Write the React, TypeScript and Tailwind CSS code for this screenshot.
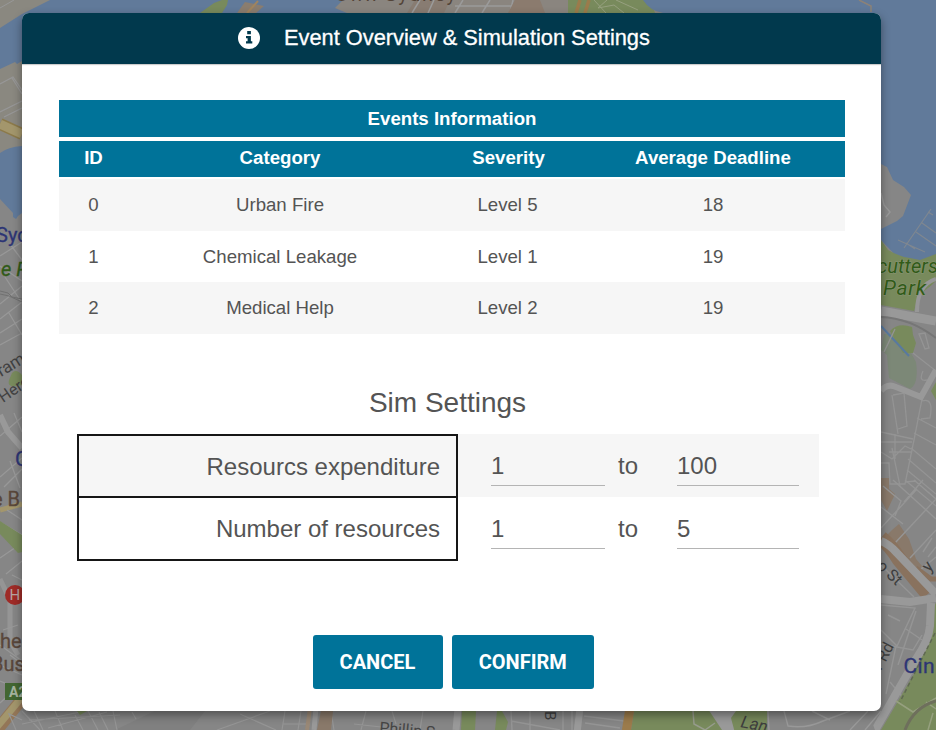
import React from "react";

const events = [
  { id: 0, category: "Urban Fire", severity: "Level 5", deadline: 18 },
  { id: 1, category: "Chemical Leakage", severity: "Level 1", deadline: 19 },
  { id: 2, category: "Medical Help", severity: "Level 2", deadline: 19 },
];

const settings = [
  { label: "Resourcs expenditure", from: "1", to: "100" },
  { label: "Number of resources", from: "1", to: "5" },
];

const columns = "grid grid-cols-[69px_304px_151px_262px]";

/* Dimmed city map behind the dialog. */
function CityMap() {
  return (
    <svg className="absolute inset-0" width="936" height="730" viewBox="0 0 936 730" fontFamily="Roboto, sans-serif">
      <rect width="936" height="730" fill="#868686" />

      {/* north-west shore */}
      <rect width="350" height="80" fill="#617a9a" />
      <path d="M0 0H50L22 14L0 28Z" fill="#8a8880" />
      <path d="M0 8L14 0" stroke="#979797" strokeWidth="1" />
      <path d="M0 69L15 62L17 64L22 61V150H0Z" fill="#8a8880" />
      <g stroke="#979797" strokeWidth="1.2" fill="none">
        <path d="M0 84L13 77L22 90M12 78L22 94M0 112L22 101M4 117L22 108" />
      </g>
      <path d="M0 124L22 134" stroke="#8c7a4a" strokeWidth="12" />
      <path d="M0 124L22 134" stroke="#a3966c" strokeWidth="9" />
      <path d="M0 153Q8 147 22 146V213L18 216L16 219L13 217V213L0 199Z" fill="#617a9a" />
      <path d="M200 13L214 3L222 0H228L227 5L222 13Z" fill="#788a5c" />
      <path d="M237 13L245 2L264 6L256 13Z" fill="#8a7d6f" />
      <path d="M258 1L247 13" stroke="#a0845e" strokeWidth="2" />
      <path d="M343 0H936V13H347L335 8Z" fill="#8a857f" />
      <path d="M415 0H450L444 13H407Z" fill="#887c72" />
      <path d="M412 13L420 0M428 13L434 0M455 13L463 0M482 13L490 0M510 13L513 0M455 6H513M530 0L543 13" stroke="#9b9b9b" strokeWidth="1.5" />
      <path d="M515 0H540L545 13H508Z" fill="#8b7b6e" />
      <path d="M568 0H650L655 13H568Z" fill="#788a5c" />
      <path d="M576 13L580 0M585 13L589 0" stroke="#9b7b4b" strokeWidth="3.5" />
      <path d="M594 0L606 13M607 0L598 8L614 5L624 13M616 0L638 10" stroke="#96a07f" strokeWidth="1" fill="none" />
      <path d="M643 0Q650 11 663 13H936V0Z" fill="#617a9a" />
      <text x="336" y="0.5" fontSize="20" fill="#534438" textLength="120">own Sydney</text>

      {/* western streets */}
      <g stroke="#989898" strokeWidth="1.3" fill="none">
        <path d="M0 256L22 242M10 244L22 260M0 266L22 281M0 304L22 286M0 319L22 302M0 333L22 319M0 345L22 333M5 277L22 303M9 313L22 335M0 436L22 417M14 413L22 432M0 477L22 458M4 487L22 469M10 461L20 488" />
      </g>
      <path d="M0 291L8 293L12 297L22 299M0 294L9 296L22 302" stroke="#717171" strokeWidth="1" fill="none" />
      <path d="M0 415L8 432L22 448" stroke="#999" strokeWidth="6" fill="none" />
      <path d="M12 373Q16 368 22 375V385L17 386Q7 388 9 380Z" fill="#788a5c" />
      <text x="-4" y="242" fontSize="20" fill="#2d3575" stroke="#2d3575" strokeWidth="0.3">Syd</text>
      <text x="1" y="276" fontSize="20" fontStyle="italic" fill="#315b18" stroke="#315b18" strokeWidth="0.3">e Park</text>
      <text fontSize="17" fill="#414141" transform="translate(1 377) rotate(-31)">ram</text>
      <text fontSize="16" fill="#414141" transform="translate(3 403) rotate(-34)">Here</text>
      <text x="15" y="466" fontSize="21" fill="#2d3575" stroke="#2d3575" strokeWidth="0.3">C</text>

      <path d="M0 510L22 504" stroke="#a3966c" strokeWidth="5" />
      <g stroke="#989898" strokeWidth="1.2" fill="none">
        <path d="M0 522L22 535M7 510L22 520M0 558L22 543M6 574L22 561M12 575L22 580" />
      </g>
      <path d="M0 521L22 535V552L18 553L0 534Z" fill="#788a5c" />
      <path d="M0 579L10 600V641L18 655" stroke="#959595" strokeWidth="5" fill="none" />
      <g stroke="#989898" strokeWidth="1.3" fill="none">
        <path d="M0 665L22 675M0 681L22 690M3 630L18 625M0 703L22 683M10 655L22 664M0 645L22 661" />
      </g>
      <path d="M-3 730L22 699" stroke="#937657" strokeWidth="12" />
      <path d="M-3 727L22 697" stroke="#a3966c" strokeWidth="7" />
      <text x="-8" y="506" fontSize="20" fill="#59473b" stroke="#59473b" strokeWidth="0.3">e B</text>
      <circle cx="15" cy="595" r="10" fill="#9e2b27" />
      <text x="9.5" y="600" fontSize="15" fill="#b7a4a2">H</text>
      <text x="0" y="648" fontSize="20" fill="#59473b" stroke="#59473b" strokeWidth="0.3">he</text>
      <text x="-9" y="671" fontSize="20" fill="#59473b" stroke="#59473b" strokeWidth="0.3">Bus</text>
      <rect x="5" y="683" width="20" height="17" fill="#426632" />
      <text x="9" y="697" fontSize="14" fontWeight="700" fill="#a5b39f">A2</text>

      {/* bay and park on the east side */}
      <path d="M860 0H936V262L900 260L881 240Z" fill="#617a9a" />
      <path d="M859 0L871 6V12" stroke="#8c8277" strokeWidth="1.5" fill="none" />
      <path d="M881 164L887 167L893 180L904 187L911 195L903 216L897 221L881 229Z" fill="#868686" />
      <path d="M881 193L884 205L890 212L886 217" stroke="#989898" strokeWidth="1.5" fill="none" />
      <path d="M904 248L931 209M916 232L936 246M922 223L936 233M906 243L915 249M928 212L933 215M898 240L925 252" stroke="#7f8790" strokeWidth="1.2" fill="none" />
      <path d="M881 240L888 250Q900 257 910 258L920 260L936 254V281L918 298L914 311L881 305Z" fill="#788a5c" />
      <path d="M936 284Q916 291 916 313H936Z" fill="#868686" />
      <path d="M936 279Q917 285 917 312" stroke="#979797" strokeWidth="4" fill="none" />
      <path d="M881 311L936 321" stroke="#999" strokeWidth="9" />
      <path d="M881 317Q910 318 936 338" stroke="#767676" strokeWidth="2" fill="none" />
      <path d="M884 334L881 350L887 355L889 378L910 389Q919 384 916 362L900 333Z" fill="#7c8877" />
      <path d="M890 331Q898 322 912 327L913 335L916 343L913 353L903 353Z" fill="#788a5c" />
      <path d="M881 326L909 356" stroke="#58799f" strokeWidth="2" />
      <g stroke="#949494" strokeWidth="1.3" fill="none">
        <path d="M884 352L895 329M919 334L925 333L929 348L925 349ZM913 353L936 371M923 371Q918 382 927 380M892 395L898 434M893 395L904 393L907 426L898 429M881 432L913 439M881 442H912M889 452H911M881 452L892 459L905 446L911 449M892 448L900 486M881 463L889 463L890 484H905L914 440L922 399M922 401Q934 397 930 418L921 419M917 418L936 428M914 433L936 445M911 448L936 469M908 459L936 483M907 470L936 494M905 480L936 506M895 434V459" />
      </g>
      <path d="M881 391Q887 383 896 387L921 397L936 370" stroke="#999" strokeWidth="6" fill="none" />
      <path d="M936 382L931 391L936 400Z" fill="#788a5c" />
      <path d="M881 478H889V489L895 494L887 511L881 500Z" fill="#89796a" />
      <path d="M892 530L899 524L909 539L916 559L922 566L917 573L887 535Z" fill="#89796a" />

      {/* south-east boulevard */}
      <g stroke="#959595" strokeWidth="1.4" fill="none">
        <path d="M893 480L936 519M881 507L903 524M883 486L901 501L895 516M881 528L917 489M895 543L936 499M910 558L936 530M914 480L936 499M923 480L904 502M923 552L932 538M928 557L936 547M916 481L905 482M920 570L936 557M881 565L914 597M881 605L915 608L897 646L881 630M888 615L900 621M881 644L913 650L922 635M906 629L922 640M896 646L886 694M916 611L898 665M890 682L905 700" />
      </g>
      <path d="M881 538Q891 546 899 559L928 594" stroke="#89725e" strokeWidth="15" fill="none" />
      <path d="M916 568L931 579H936" stroke="#89725e" strokeWidth="5" fill="none" />
      <path d="M936 603V730H881L914 674L929 636L932 610Z" fill="#788a5c" />
      <path d="M881 541Q889 544 897 553L936 594M881 599L910 602L936 598M931 603L930 626Q929 640 916 659L874 732" stroke="#999" strokeWidth="8" fill="none" />
      <path d="M935 633L900 702" stroke="#5f6852" strokeWidth="1.5" strokeDasharray="4 3" />
      <path d="M896 701L913 712L936 698M926 702L936 709M933 713L928 730" stroke="#96a07f" strokeWidth="1.5" fill="none" />
      <path d="M905 730Q914 707 936 701" stroke="#6e6f5c" strokeWidth="3" fill="none" />
      <text x="877" y="273" fontSize="20" fontStyle="italic" fill="#315b18" stroke="#8c9678" strokeWidth="1" paintOrder="stroke" textLength="61">cutters</text>
      <text x="883" y="295" fontSize="21" fontStyle="italic" fill="#315b18" stroke="#8c9678" strokeWidth="1" paintOrder="stroke" textLength="43">Park</text>
      <text fontSize="16" fill="#3e3e3e" transform="translate(876 567) rotate(43)">o St</text>
      <text fontSize="16" fill="#3e3e3e" transform="translate(881 671) rotate(-62)">r Rd</text>
      <text fontSize="17" fill="#3e3e3e" transform="translate(929 573) rotate(-48)">y</text>
      <text x="903.5" y="673" fontSize="21" fill="#2d3575" stroke="#2d3575" strokeWidth="0.3" textLength="31">Cin</text>

      {/* southern edge */}
      <path d="M155 711H205L190 730H115Z" fill="#808080" />
      <g stroke="#959595" strokeWidth="1.2" fill="none">
        <path d="M22 711L40 730M22 720L9 714L16 730M22 724L85 711M34 711L43 730M48 728L107 712M55 711L63 730M75 715L83 730M88 711L98 730M99 712L108 730M29 720L120 715M113 711L117 730M132 712L136 719M217 730L270 711M240 714L276 730M285 711L282 730M301 711L298 730M283 724H310M331 711L334 730M354 724L390 728M366 711L361 730M392 711L396 724M423 711L420 730" />
      </g>
      <path d="M77 711H87L80 715Z" fill="#788a5c" />
      <path d="M310 708L307 730" stroke="#998876" strokeWidth="4" />
      <path d="M316 708L314 730" stroke="#999" strokeWidth="5" />
      <path d="M321 711H333L331 730H317Z" fill="#89796a" />
      <path d="M458 708L456 730" stroke="#999" strokeWidth="7" />
      <path d="M462 711H476L475 730H461Z" fill="#788a5c" />
      <path d="M497 711H502L508 722L506 730H495Z" fill="#788a5c" />
      <path d="M511 711L512 730M530 711V730M563 711V730M572 711V730M511 721L560 730M584 716L624 721M585 723L620 728" stroke="#959595" strokeWidth="1.4" fill="none" />
      <path d="M580 708L577 733" stroke="#999" strokeWidth="7" />
      <path d="M634 711H767V730H631Z" fill="#788a5c" />
      <path d="M630 708L626 733" stroke="#9b7b4b" strokeWidth="9" />
      <path d="M693 711L694 724L705 730L715 723" stroke="#979c8d" strokeWidth="1.5" fill="none" />
      <path d="M706 706L724 733H735L731 718L736 711Z" fill="#999" />
      <path d="M768 711H868L875 730H769Z" fill="#868686" />
      <path d="M768 711L769 730M784 711L788 726Q806 729 823 721L850 711M812 711L830 720M868 711L850 730M881 711L865 730" stroke="#999" strokeWidth="1.4" fill="none" />
      <text fontSize="16" fill="#454545" transform="translate(379 733) rotate(5)" textLength="56">Phillip S</text>
      <text fontSize="15" fill="#3e3e3e" transform="translate(545 711) rotate(90)">B</text>
      <text fontSize="17" fontStyle="italic" fill="#3e3e3e" transform="translate(740 727) rotate(12)">Lan</text>
    </svg>
  );
}

function InfoIcon() {
  return (
    <svg width="22" height="22" viewBox="0 0 22 22" className="shrink-0">
      <circle cx="11" cy="11" r="11" fill="#fff" />
      <path d="M9.2 4h3.7v3.3H9.2zM8 9h4.9v5.2h1.4v2.2H8v-2.2h1.6v-3H8z" fill="#01394d" />
    </svg>
  );
}

function RangeField({ value, className }: { value: string; className: string }) {
  return <div className={`h-[34px] border-b-[1.5px] border-[#b4b4b4] leading-7 ${className}`}>{value}</div>;
}

export default function App() {
  return (
    <div className="relative flow-root h-[730px] w-[936px] overflow-hidden font-['Liberation_Sans',Arial,sans-serif]">
      <CityMap />
      <section className="relative ml-[22px] mt-[12.5px] flex h-[698.5px] w-[859px] flex-col overflow-hidden rounded-[7px] bg-white text-[#545454] shadow-[0_4px_10px_rgba(0,0,0,0.4)]">
        <header className="flex h-[51.5px] shrink-0 items-center bg-[#01394d] pl-[215.5px] text-[21.8px] text-white shadow-[0_1px_1px_rgba(0,0,0,0.2)]">
          <InfoIcon />
          <h1 className="ml-[24.5px] whitespace-nowrap [-webkit-text-stroke:0.3px_white]">
            Event Overview &amp; Simulation Settings
          </h1>
        </header>

        <div className="ml-[37px] mt-9 w-[786px] text-center text-[18.65px]">
          <div className="h-[37px] bg-[#007399] font-bold leading-[37px] text-white">Events Information</div>
          <div className={`${columns} mt-[3.5px] h-[36.5px] bg-[#007399] font-bold leading-[34px] text-white`}>
            <span>ID</span>
            <span>Category</span>
            <span className="pl-[2px]">Severity</span>
            <span className="pr-[2px]">Average Deadline</span>
          </div>
          <div className="mt-[2px]">
            {events.map((e) => (
              <div key={e.id} className={`${columns} h-[51.7px] leading-[51px] odd:bg-[#f6f6f6]`}>
                <span>{e.id}</span>
                <span>{e.category}</span>
                <span>{e.severity}</span>
                <span className="pr-[2px]">{e.deadline}</span>
              </div>
            ))}
          </div>
        </div>

        <h2 className="mt-[53px] h-[47px] pr-2 text-center text-[28px] leading-8">Sim Settings</h2>

        <div className="ml-[54.5px] w-[742.5px] text-2xl">
          {settings.map((s, i) => (
            <div key={s.label} className={`flex odd:bg-[#f6f6f6] ${i === 0 ? "h-[63px]" : "h-[64px]"}`}>
              <div
                className={`h-[64px] w-[381.5px] shrink-0 border-x-2 border-b-2 border-[#161616] pr-4 text-right ${
                  i === 0 ? "border-t-2 leading-[62px]" : "leading-[64px]"
                }`}
              >
                {s.label}
              </div>
              <div className="flex pt-[18px]">
                <RangeField value={s.from} className="ml-[33px] w-[114px]" />
                <span className="ml-[13px] w-5 leading-7">to</span>
                <RangeField value={s.to} className="ml-[39px] w-[122px]" />
              </div>
            </div>
          ))}
        </div>

        <div className="mt-[73.5px] flex gap-[9px] pl-[290.5px] font-[Roboto,sans-serif] text-[20px] font-bold text-white">
          <button className="h-[54px] w-[130px] rounded-[3px] bg-[#007399] pt-px">CANCEL</button>
          <button className="h-[54px] w-[142.5px] rounded-[3px] bg-[#007399] pt-px">CONFIRM</button>
        </div>
      </section>
    </div>
  );
}
